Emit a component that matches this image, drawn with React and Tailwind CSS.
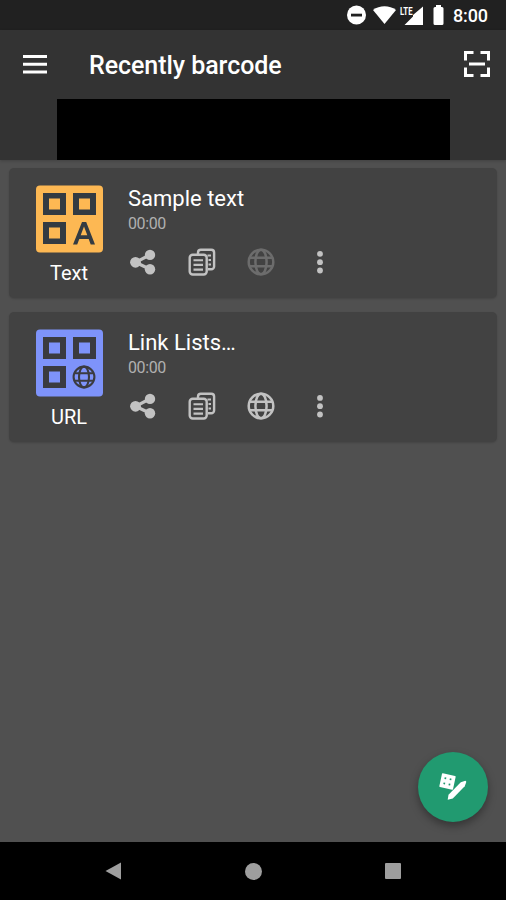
import React from 'react';

const items = [
  { id: 1, type: 'text', label: 'Text', title: 'Sample text', time: '00:00', link: false },
  { id: 2, type: 'url', label: 'URL', title: 'Link Lists…', time: '00:00', link: true },
];

const Globe = ({ className }) => (
  <svg className={className} viewBox="0 0 28 28" fill="none" stroke="currentColor" strokeWidth="2.5">
    <circle cx="14" cy="14" r="12.3" />
    <ellipse cx="14" cy="14" rx="5.6" ry="12.3" />
    <path d="M3 9.700h22M3 18.300h22" />
  </svg>
);

const CodeIcon = ({ type }) => {
  const dark = type === 'text' ? '#343b42' : '#3b3b40';
  const light = type === 'text' ? '#fdb853' : '#7e93fa';
  const spots = [[7, 8], [37, 8], [7, 37]];
  return (
    <svg className="w-[67px] h-[68px]" viewBox="0 0 67 68" fill="none">
      <rect width="67" height="67" y="0.5" rx="4" fill={light} />
      {spots.map(([x, y]) => (
        <g key={`${x}-${y}`}>
          <rect x={x} y={y} width="23" height="22" fill={dark} />
          <rect x={x + 6} y={y + 5.5} width="11" height="11" fill={light} />
        </g>
      ))}
      {type === 'text' ? (
        <path d="M37 59.500L46 37h4.200L59 59.500h-4.300L52.700 54H43.300L41.200 59.500zM44.700 50.300h6.600L48 41.600z" fill={dark} fillRule="evenodd" />
      ) : (
        <g stroke={dark} strokeWidth="2.1">
          <circle cx="48" cy="48" r="10.4" />
          <ellipse cx="48" cy="48" rx="5" ry="10.4" />
          <path d="M38.800 44.300h18.400M38.800 51.700h18.400" />
        </g>
      )}
    </svg>
  );
};

const Share = () => (
  <svg className="w-7 h-7" viewBox="0 0 28 28" fill="currentColor">
    <path d="M6.500 14.300L21.500 6.500M6.500 14.300L21.500 21.500" stroke="currentColor" strokeWidth="3.2" />
    <circle cx="6.500" cy="14.300" r="5.4" />
    <circle cx="21" cy="6.900" r="5.200" />
    <circle cx="21" cy="21.300" r="5.200" />
  </svg>
);

const Copy = () => (
  <svg className="w-7 h-7" viewBox="0 0 28 28" fill="none" stroke="currentColor" strokeWidth="2.400">
    <path d="M10 6V4.500A2.800 2.800 0 0 1 12.800 1.700h10.500A2.800 2.800 0 0 1 26.100 4.500v14a2.800 2.800 0 0 1-2.800 2.800H20" />
    <rect x="1.700" y="6.800" width="17" height="19.700" rx="3" />
    <path d="M5.500 12.200h9.500M5.500 16.900h9.500M5.500 21.600h9.500M19.500 7.500h3.500M20.500 12h2.500M20.500 16.500h2.500" strokeWidth="2.100" />
  </svg>
);

const Card = ({ item }) => (
  <div className="flex h-[130px] rounded-[5px] bg-[#424242] shadow-[0_1px_2px_rgba(0,0,0,0.15)]">
    {/* Code type */}
    <div className="flex w-[119px] flex-col items-center pt-[17px] pl-px">
      <CodeIcon type={item.type} />
      <span className="mt-2 text-[20px] leading-6 text-white">{item.label}</span>
    </div>

    {/* Details and actions */}
    <div className="pt-[17px]">
      <h2 className="text-[22px] leading-7 text-white">{item.title}</h2>
      <p className="pt-px text-[16px] leading-5 tracking-[-0.4px] text-[#b0b0b0]">{item.time}</p>
      <div className="mt-[14px] ml-px flex items-center gap-[31px] text-[#c2c2c2]">
        <button><Share /></button>
        <button><Copy /></button>
        <button className={item.link ? '' : 'text-[#6c6c6c]'}>
          <Globe className="w-7 h-7" />
        </button>
        <button>
          <svg className="w-7 h-7" viewBox="0 0 28 28" fill="currentColor">
            <circle cx="14" cy="5.9" r="2.9" />
            <circle cx="14" cy="14.200" r="2.9" />
            <circle cx="14" cy="22.500" r="2.9" />
          </svg>
        </button>
      </div>
    </div>
  </div>
);

const App = () => {
  return (
    <div className="relative flex h-[900px] w-[506px] flex-col overflow-hidden bg-[#505050] font-['Roboto',sans-serif]">
      {/* Status bar */}
      <div className="flex h-[30px] items-center justify-end bg-[#212121] pr-[18px] text-white">
        <svg className="h-[30px] w-[98px]" viewBox="346 0 98 30" fill="currentColor">
          <circle cx="356.5" cy="15" r="9.500" />
          <path d="M351 13.700h11v2.800h-11z" fill="#212121" />
          <path d="M384.500 24L373 10c6.500-5 16.500-5 23 0z" />
          <path d="M423 6.500V25h-18.500l8.500-8.500V15z" />
          <text x="400" y="14.500" fontSize="11" fontWeight="700" textLength="12.500" lengthAdjust="spacingAndGlyphs">LTE</text>
          <path d="M436 5h5v2h1a1.500 1.500 0 0 1 1.500 1.500v15A1.500 1.500 0 0 1 442 25h-7a1.500 1.500 0 0 1-1.500-1.500v-15A1.500 1.500 0 0 1 435 7h1z" />
        </svg>
        <span className="ml-[9px] pt-px text-[18px] leading-[29px] font-medium tracking-[-0.1px]">8:00</span>
      </div>

      {/* Header */}
      <header className="h-[130px] bg-[#333333] shadow-[0_1px_3px_rgba(0,0,0,0.2)]">
        <div className="flex h-[69px] items-center pr-4 pl-[23px] text-white">
          <button>
            <svg className="h-[19px] w-6" viewBox="0 0 24 19" fill="currentColor">
              <path d="M0 0h24v3H0zM0 7.700h24v3H0zM0 15.400h24v3H0z" />
            </svg>
          </button>
          <h1 className="ml-[42px] pt-[2px] text-[25px] leading-8 font-medium tracking-[-0.05px]">Recently barcode</h1>
          <button className="mb-px ml-auto">
            <svg className="h-[26px] w-[26px]" viewBox="0 0 26 26" fill="none" stroke="currentColor" strokeWidth="3">
              <path d="M9.500 1.500H1.500V9.500M16.500 1.500h8V9.500M9.500 24.500H1.500V16.500M16.500 24.500h8V16.500M5 13h16" />
            </svg>
          </button>
        </div>
        <div className="ml-[57px] h-[61px] w-[393px] bg-black" />
      </header>

      {/* Barcode list */}
      <main className="flex-1 space-y-[14px] px-[9px] pt-2">
        {items.map((item) => (
          <Card key={item.id} item={item} />
        ))}
      </main>

      {/* Create button */}
      <button className="absolute top-[752px] left-[418px] flex h-[70px] w-[70px] items-center justify-center rounded-full bg-[#219a70] text-white shadow-[0_4px_8px_rgba(0,0,0,0.35)]">
        <svg className="h-[28px] w-[28px]" viewBox="0 0 28 28" fill="currentColor">
          <g transform="rotate(12 8.500 8.500)">
            <rect x="1.500" y="1.500" width="14" height="14" rx="0.800" />
            <path d="M4.900 4.900h1.700v1.700h-1.700zM10.200 4.900h1.700v1.700h-1.700zM4.900 10.200h1.700v1.700h-1.700zM10.200 10.200h1.700v1.700h-1.700z" fill="#219a70" />
          </g>
          <path d="M8.700 26.700l.8-5L21.800 9.200l4.500-1.400q1.200.2.900 1.400L25.700 13.200 13.800 25.400z" />
        </svg>
      </button>

      {/* Navigation bar */}
      <nav className="flex h-[58px] items-center justify-between bg-black px-[105px] text-[#9e9e9e]">
        <svg className="h-[18px] w-4" viewBox="0 0 16 18" fill="currentColor">
          <path d="M16 0.500v17L0.500 9z" />
        </svg>
        <div className="h-[17px] w-[17px] rounded-full bg-[#9e9e9e]" />
        <div className="h-4 w-4 rounded-[1px] bg-[#9e9e9e]" />
      </nav>
    </div>
  );
};

export default App;
